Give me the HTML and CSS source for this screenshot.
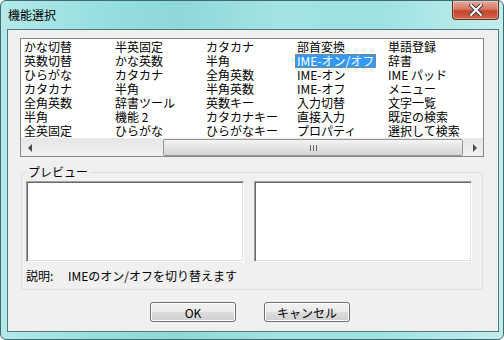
FILE: index.html
```html
<!DOCTYPE html>
<html lang="ja">
<head>
    <meta charset="UTF-8">
    <title>機能選択</title>
    <link rel="stylesheet" href="styles.css">
</head>
<body>
    <div class="window">
        <div class="titlebar">
            <span class="title">機能選択</span>
            <div class="close-btn">
                <svg width="14" height="12" viewBox="0 0 14 12">
                    <path d="M2 1 L12 11 M12 1 L2 11" stroke="#3a3a3a" stroke-width="4" stroke-linecap="square"/>
                    <path d="M2 1 L12 11 M12 1 L2 11" stroke="#ffffff" stroke-width="2" stroke-linecap="square"/>
                </svg>
            </div>
        </div>

        <div class="client">
            <!-- 機能リスト -->
            <div class="listbox">
                <ul class="items">
                    <li>かな切替</li>
                    <li>英数切替</li>
                    <li>ひらがな</li>
                    <li>カタカナ</li>
                    <li>全角英数</li>
                    <li>半角</li>
                    <li>全英固定</li>

                    <li>半英固定</li>
                    <li>かな英数</li>
                    <li>カタカナ</li>
                    <li>半角</li>
                    <li>辞書ツール</li>
                    <li>機能 2</li>
                    <li>ひらがな</li>

                    <li>カタカナ</li>
                    <li>半角</li>
                    <li>全角英数</li>
                    <li>半角英数</li>
                    <li>英数キー</li>
                    <li>カタカナキー</li>
                    <li>ひらがなキー</li>

                    <li>部首変換</li>
                    <li class="selected">IME-オン/オフ</li>
                    <li>IME-オン</li>
                    <li>IME-オフ</li>
                    <li>入力切替</li>
                    <li>直接入力</li>
                    <li>プロパティ</li>

                    <li>単語登録</li>
                    <li>辞書</li>
                    <li>IME パッド</li>
                    <li>メニュー</li>
                    <li>文字一覧</li>
                    <li>既定の検索</li>
                    <li>選択して検索</li>
                </ul>
                <div class="hscroll">
                    <div class="arrow"><span class="tri-left"></span></div>
                    <div class="track">
                        <div class="thumb"><span class="grip"></span></div>
                    </div>
                    <div class="arrow"><span class="tri-right"></span></div>
                </div>
            </div>

            <!-- プレビュー -->
            <fieldset class="preview">
                <legend>プレビュー</legend>
                <div class="preview-boxes">
                    <div class="pbox"></div>
                    <div class="pbox"></div>
                </div>
                <div class="desc">
                    <span class="desc-label">説明:</span>
                    <span>IMEのオン/オフを切り替えます</span>
                </div>
            </fieldset>

            <div class="buttons">
                <button class="btn">OK</button>
                <button class="btn">キャンセル</button>
            </div>
        </div>
    </div>
</body>
</html>
```

FILE: styles.css
```css
body {
    margin: 0;
    font-family: "Noto Sans CJK JP", sans-serif;
    font-size: 12px;
    color: #000;
    background-color: #fff;
}
.window {
    width: 504px;
    height: 340px;
    box-sizing: border-box;
    border: 1px solid #3f6a70;
    border-radius: 6px;
    padding: 0 4px 7px 6px;
    background: linear-gradient(to right, #b4e9e9 0%, #96dfdf 20%, #8ed8d8 35%, #a3e3e3 55%, #9ee2e2 75%, #c2eded 100%);
    display: flex;
    flex-direction: column;
}
.titlebar {
    height: 28px;
    display: flex;
    align-items: flex-start;
    flex-shrink: 0;
}
.title {
    padding: 7px 0 0 1px;
    line-height: 14px;
}
.close-btn {
    margin-left: auto;
    width: 47px;
    height: 19px;
    box-sizing: border-box;
    border: 1px solid #6a2b22;
    border-top: none;
    border-radius: 0 0 4px 4px;
    background: linear-gradient(#e9a898 0%, #d67a65 45%, #c4452c 55%, #d0664c 100%);
    box-shadow: inset 0 0 0 1px rgba(255,255,255,0.35);
    display: flex;
    align-items: center;
    justify-content: center;
}
.client {
    flex: 1;
    border: 1px solid #52767e;
    background-color: #f0f0f0;
}

/* リストボックス */
.listbox {
    width: 464px;
    height: 119px;
    box-sizing: border-box;
    margin: 8px 0 0 12px;
    border: 1px solid #828790;
    background-color: #fff;
    display: flex;
    flex-direction: column;
}
.items {
    list-style: none;
    margin: 0;
    padding: 1px 0 0 1px;
    height: 100px;
    box-sizing: border-box;
    display: grid;
    grid-template-rows: repeat(7, 14px);
    grid-auto-flow: column;
    grid-auto-columns: 91px;
}
.items li {
    line-height: 14px;
    padding: 0 2px;
    white-space: nowrap;
    justify-self: start;
}
.items li.selected {
    background-color: #3399ff;
    color: #fff;
    outline: 1px dotted #c07a3a;
    outline-offset: -1px;
}
.hscroll {
    height: 17px;
    display: flex;
    background: linear-gradient(#e6e6e6, #f2f2f2);
    border-top: 1px solid #e9e9e9;
}
.arrow {
    width: 17px;
    display: flex;
    align-items: center;
    justify-content: center;
}
.tri-left {
    border-top: 4px solid transparent;
    border-bottom: 4px solid transparent;
    border-right: 4px solid #4a4a4a;
}
.tri-right {
    border-top: 4px solid transparent;
    border-bottom: 4px solid transparent;
    border-left: 4px solid #4a4a4a;
}
.track {
    flex: 1;
    display: flex;
}
.thumb {
    width: 300px;
    margin-left: 125px;
    box-sizing: border-box;
    border: 1px solid #979797;
    border-radius: 2px;
    background: linear-gradient(#f5f5f5, #e3e3e3 50%, #d6d6d6);
    display: flex;
    align-items: center;
    justify-content: center;
}
.grip {
    width: 7px;
    height: 6px;
    background: repeating-linear-gradient(to right, #6a6a6a 0 1px, transparent 1px 3px);
}

/* プレビュー */
.preview {
    width: 462px;
    box-sizing: border-box;
    margin: 8px 0 0 13px;
    padding: 2px 10px 6px 4px;
    border: 1px solid #d5dfe5;
    border-radius: 3px;
    min-inline-size: 0;
}
.preview legend {
    padding: 0 2px;
    margin-left: 0;
    line-height: 14px;
}
.preview-boxes {
    display: flex;
    gap: 10px;
}
.pbox {
    width: 218px;
    height: 81px;
    box-sizing: border-box;
    background-color: #fff;
    border: 1px solid;
    border-color: #a0a0a0 #ffffff #ffffff #a0a0a0;
    box-shadow: inset 1px 1px 0 #696969, inset -1px -1px 0 #e3e3e3;
}
.desc {
    margin-top: 7px;
    line-height: 14px;
    display: flex;
}
.desc-label {
    width: 42px;
}

/* ボタン */
.buttons {
    display: flex;
    gap: 28px;
    margin: 12px 0 0 142px;
}
.btn {
    width: 86px;
    height: 20px;
    padding: 0;
    font-family: inherit;
    font-size: 12px;
    color: #000;
    border: 1px solid #707070;
    border-radius: 3px;
    background: linear-gradient(#f2f2f2 0%, #ebebeb 49%, #dddddd 50%, #cfcfcf 100%);
    box-shadow: inset 0 0 0 1px #fcfcfc;
}
```
